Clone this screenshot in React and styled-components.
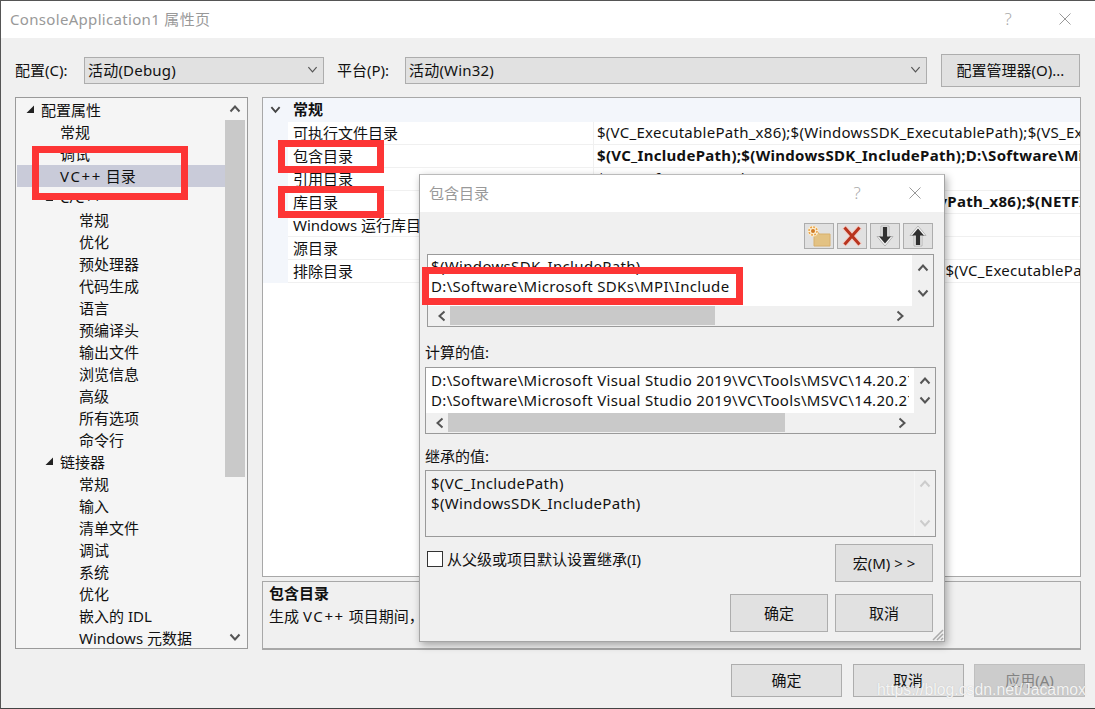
import React from "react";
import styled, { createGlobalStyle } from "styled-components";

const GlobalStyle = createGlobalStyle`
  html, body {
    margin: 0;
    padding: 0;
    background: #f0f0f0;
    overflow: hidden;
  }
  * {
    box-sizing: border-box;
  }
  body {
    font-family: "Noto Sans", "Noto Sans CJK SC", sans-serif;
    font-size: 14px;
    color: #111;
  }
`;

const treeRows = [
  { label: "配置属性", level: 0, open: true },
  { label: "常规", level: 1 },
  { label: "调试", level: 1 },
  { label: "VC++ 目录", level: 1, selected: true },
  { label: "C/C++", level: 1, open: true },
  { label: "常规", level: 2 },
  { label: "优化", level: 2 },
  { label: "预处理器", level: 2 },
  { label: "代码生成", level: 2 },
  { label: "语言", level: 2 },
  { label: "预编译头", level: 2 },
  { label: "输出文件", level: 2 },
  { label: "浏览信息", level: 2 },
  { label: "高级", level: 2 },
  { label: "所有选项", level: 2 },
  { label: "命令行", level: 2 },
  { label: "链接器", level: 1, open: true },
  { label: "常规", level: 2 },
  { label: "输入", level: 2 },
  { label: "清单文件", level: 2 },
  { label: "调试", level: 2 },
  { label: "系统", level: 2 },
  { label: "优化", level: 2 },
  { label: "嵌入的 IDL", level: 2 },
  { label: "Windows 元数据", level: 2 },
];

const gridRows = [
  { name: "可执行文件目录", value: "$(VC_ExecutablePath_x86);$(WindowsSDK_ExecutablePath);$(VS_ExecutablePath_x86)" },
  { name: "包含目录", value: "$(VC_IncludePath);$(WindowsSDK_IncludePath);D:\\Software\\Microsoft SDKs\\MPI\\Include", bold: true },
  { name: "引用目录", value: "$(VC_ReferencesPath_x86);" },
  { name: "库目录", value: "$(VC_LibraryPath_x86);$(WindowsSDK_LibraryPath_x86);$(NETFXKitsDir)Lib\\um\\x86", bold: true },
  { name: "Windows 运行库目录", value: "$(WindowsSDK_MetadataPath);" },
  { name: "源目录", value: "$(VC_SourcePath);" },
  { name: "排除目录", value: "$(VC_IncludePath);$(WindowsSDK_IncludePath);$(VC_ExecutablePath_x86);$(VC_LibraryPath_x86)" },
];

const msvcPath = "D:\\Software\\Microsoft Visual Studio 2019\\VC\\Tools\\MSVC\\14.20.27508\\include";

const Root = styled.div`
  position: relative;
  width: 1095px;
  height: 709px;
  overflow: hidden;
`;

const Window = styled.div`
  width: 100%;
  height: 100%;
  display: flex;
  flex-direction: column;
  background: #f0f0f0;
  border-top: 1px solid #555;
  border-left: 1px solid #555;
  border-bottom: 1px solid #444;
`;

const TitleBar = styled.div`
  height: 37px;
  flex: none;
  display: flex;
  align-items: center;
  padding-bottom: 2px;
  background: #fff;
  color: #999;
`;

const TitleText = styled.div`
  flex: 1;
  padding-left: 9px;
  font-size: 15px;
  letter-spacing: ${(p) => p.$spacing || 0}px;
  white-space: nowrap;
`;

const TitleHelp = styled.span`
  width: 20px;
  margin-right: ${(p) => p.$gap}px;
  text-align: center;
  font-size: 17px;
  font-weight: 300;
  color: #aaa;
`;

const TitleClose = styled.span`
  width: ${(p) => p.$width}px;
  display: flex;
  justify-content: center;
`;

const Toolbar = styled.div`
  display: flex;
  align-items: center;
  height: 33px;
  margin-top: 16px;
  padding-left: 14px;
`;

const FieldLabel = styled.label`
  width: ${(p) => p.$width}px;
  padding-left: ${(p) => p.$inset || 0}px;
  padding-bottom: 2px;
  font-size: 15px;
  white-space: nowrap;
`;

const Select = styled.div`
  width: ${(p) => p.$width}px;
  height: 27px;
  display: flex;
  align-items: center;
  justify-content: space-between;
  padding: 0 5px 2px 3px;
  background: #e1e1e1;
  border: 1px solid #adadad;
  font-size: 15px;
  letter-spacing: 0.2px;
`;

const Button = styled.button`
  width: ${(p) => p.$width}px;
  height: ${(p) => p.$height}px;
  margin-left: ${(p) => p.$offset || 0}px;
  flex: none;
  padding: 0 0 2px;
  background: ${(p) => (p.disabled ? "#ccc" : "#e1e1e1")};
  border: 1px solid ${(p) => (p.disabled ? "#bfbfbf" : "#adadad")};
  color: ${(p) => (p.disabled ? "#838383" : "#111")};
  font-family: inherit;
  font-size: 15px;
  white-space: nowrap;
`;

const Main = styled.div`
  display: flex;
  gap: 14px;
  height: 553px;
  margin-top: 10px;
  padding-left: 14px;
`;

const TreePanel = styled.div`
  width: 233px;
  height: 552px;
  display: flex;
  background: #f5f5f5;
  border: 1px solid #9a9a9a;
`;

const TreeList = styled.div`
  flex: 1;
  min-width: 0;
  padding: 1px 0 0 1px;
  overflow: hidden;
`;

const TreeRow = styled.div`
  height: 22px;
  display: flex;
  align-items: center;
  padding-left: ${(p) => 9 + p.$level * 19}px;
  padding-bottom: 2px;
  background: ${(p) => (p.$selected ? "#c9cbd9" : "transparent")};
  font-size: 15px;
  white-space: nowrap;
`;

const Twisty = styled.span`
  width: 15px;
  flex: none;
  display: flex;
  align-items: center;
`;

const WideSigns = styled.span`
  letter-spacing: 1.6px;
`;

const TreeScroll = styled.div`
  width: 20px;
  flex: none;
  margin-right: 2px;
  display: flex;
  flex-direction: column;
  align-items: center;
`;

const ScrollCap = styled.div`
  width: 100%;
  height: ${(p) => p.$height}px;
  flex: none;
  display: flex;
  align-items: center;
  justify-content: center;
`;

const TreeThumb = styled.div`
  width: 100%;
  height: 357px;
  flex: none;
  background: #c9c9c9;
`;

const TreeTrack = styled.div`
  flex: 1;
`;

const RightColumn = styled.div`
  width: 819px;
  display: flex;
  flex-direction: column;
  gap: 4px;
`;

const PropertyGrid = styled.div`
  height: 480px;
  background: #fff;
  border: 1px solid #a8a8a8;
  overflow: hidden;
`;

const GridHeader = styled.div`
  height: 24px;
  display: flex;
  align-items: center;
  background: #f3f6fb;
  font-size: 15px;
  font-weight: 700;
`;

const GridHeaderLabel = styled.div`
  padding: 0 0 3px 5px;
`;

const GridGutter = styled.div`
  width: 25px;
  height: 100%;
  flex: none;
  display: flex;
  align-items: center;
  justify-content: center;
  padding-bottom: 2px;
  background: #f3f6fb;
`;

const GridRow = styled.div`
  height: 23px;
  display: flex;
  align-items: center;
  font-size: 15px;
  white-space: nowrap;
`;

const GridName = styled.div`
  width: 305px;
  height: 100%;
  flex: none;
  display: flex;
  align-items: center;
  padding: 0 0 2px 5px;
  border-bottom: 1px solid #f0f0f0;
`;

const GridValue = styled.div`
  flex: 1;
  min-width: 0;
  height: 100%;
  display: flex;
  align-items: center;
  padding: 0 0 2px 3px;
  overflow: hidden;
  border-left: 1px solid #f0f0f0;
  border-bottom: 1px solid #f0f0f0;
  font-weight: ${(p) => (p.$bold ? 700 : 400)};
  letter-spacing: ${(p) => (p.$bold ? 0.3 : 0.27)}px;
`;

const Description = styled.div`
  height: 69px;
  padding: 0 6px;
  border: 1px solid #a8a8a8;
  border-bottom-width: 2px;
  font-size: 15px;
  line-height: 23px;
`;

const DescriptionTitle = styled.div`
  font-weight: 700;
`;

const Footer = styled.div`
  display: flex;
  justify-content: flex-end;
  gap: 10.5px;
  margin-top: 14px;
  padding-right: 10px;
`;

const Dialog = styled.div`
  position: absolute;
  left: 419px;
  top: 174px;
  width: 526px;
  height: 468px;
  display: flex;
  flex-direction: column;
  background: #f0f0f0;
  border: 1px solid #a5a5a5;
  border-top-color: #bbb;
  box-shadow: 2px 3px 8px rgba(0, 0, 0, 0.32);
`;

const DialogBody = styled.div`
  flex: 1;
  padding: 11px 8px 0 5px;
  display: flex;
  flex-direction: column;
`;

const IconRow = styled.div`
  display: flex;
  justify-content: flex-end;
  gap: 3px;
  margin-right: 3px;
`;

const IconButton = styled.button`
  width: 30px;
  height: 26px;
  padding: 0;
  display: flex;
  align-items: center;
  justify-content: center;
  background: #e1e1e1;
  border: 1px solid #adadad;
`;

const ListBox = styled.div`
  height: ${(p) => p.$height}px;
  margin: ${(p) => p.$margin || "0"};
  flex: none;
  display: flex;
  flex-direction: column;
  background: #f0f0f0;
  border: 1px solid #9a9a9a;
`;

const ListTop = styled.div`
  flex: 1;
  min-height: 0;
  display: flex;
`;

const ListLines = styled.div`
  flex: 1;
  min-width: 0;
  padding: ${(p) => p.$top}px 5px 0 ${(p) => p.$left}px;
  background: ${(p) => (p.$flat ? "#f0f0f0" : "#fff")};
  overflow: hidden;
  font-size: 15px;
  line-height: 20px;
  letter-spacing: 0.33px;
  white-space: nowrap;
`;

const ListLine = styled.div`
  overflow: hidden;
`;

const VScroll = styled.div`
  width: 21px;
  flex: none;
  padding: 7px 0;
  display: flex;
  flex-direction: column;
  align-items: center;
  justify-content: space-between;
  border-left: 1px solid ${(p) => (p.$faint ? "#f6f6f6" : "transparent")};
`;

const HScroll = styled.div`
  height: 20px;
  flex: none;
  display: flex;
  align-items: center;
  justify-content: space-between;
  padding: 0 27px 0 8px;
  position: relative;
`;

const HThumb = styled.div`
  position: absolute;
  top: 0;
  left: 22px;
  height: 19px;
  background: #c9c9c9;
`;

const GroupLabel = styled.div`
  height: 20px;
  margin: ${(p) => p.$top}px 0 ${(p) => p.$bottom}px;
  font-size: 15px;
  line-height: 20px;
`;

const MacroRow = styled.div`
  display: flex;
  justify-content: space-between;
  margin-top: 7px;
  padding: 0 3px 0 2px;
`;

const CheckLabel = styled.div`
  display: flex;
  gap: 4px;
  height: 29px;
  align-items: center;
  font-size: 15px;
`;

const CheckBox = styled.span`
  width: 16px;
  height: 16px;
  background: #fff;
  border: 1px solid #333;
`;

const DialogFooter = styled.div`
  display: flex;
  justify-content: flex-end;
  gap: 7px;
  margin-top: 12px;
  padding-right: 3px;
`;

const Grip = styled.svg`
  position: absolute;
  right: 0;
  bottom: 0;
`;

const Mark = styled.div`
  position: absolute;
  left: ${(p) => p.$x}px;
  top: ${(p) => p.$y}px;
  width: ${(p) => p.$w}px;
  height: ${(p) => p.$h}px;
  border: 7px solid #fd3535;
  pointer-events: none;
`;

const Watermark = styled.div`
  position: absolute;
  left: 877px;
  top: 681px;
  font-family: "Liberation Sans", Arial, sans-serif;
  font-size: 15.8px;
  color: rgba(255, 255, 255, 0.85);
  text-shadow: 0 0 1px rgba(150, 150, 150, 0.5);
  white-space: nowrap;
`;

const ChevronSvg = styled.svg`
  flex: none;
  transform: rotate(${(p) => p.$turn}deg);
`;

// base shape points down, dir turns it
const Chevron = ({ dir = "down", size = 12, color = "#555", width = 2 }) => {
  const turn = { down: 0, up: 180, left: 90, right: -90 }[dir];
  return (
    <ChevronSvg $turn={turn} width={size} height={size} viewBox="0 0 12 12">
      <polyline points="1.5,3.5 6,8.5 10.5,3.5" fill="none" stroke={color} strokeWidth={width} />
    </ChevronSvg>
  );
};

const Arrow = () => (
  <svg width="9" height="9" viewBox="0 0 9 9">
    <polygon points="8,0.5 8,8 0.5,8" fill="#222" />
  </svg>
);

const CloseIcon = ({ size }) => (
  <svg width={size} height={size} viewBox="0 0 12 12">
    <path d="M0.5 0.5L11.5 11.5M11.5 0.5L0.5 11.5" stroke="#999" strokeWidth="1" fill="none" />
  </svg>
);

const FolderIcon = () => (
  <svg width="26" height="24" viewBox="0 0 26 24">
    <path d="M7 8H12L13 10H24V22H8V8Z" fill="#e3c283" stroke="#d8b06c" strokeWidth="1" />
    <circle cx="7" cy="7" r="5.5" fill="#fbeed2" />
    <circle cx="7" cy="7" r="4" fill="none" stroke="#e9a24a" strokeWidth="1.6" strokeDasharray="1.8 1.3" />
    <circle cx="7" cy="7" r="2" fill="#cf7a26" />
  </svg>
);

const DeleteIcon = () => (
  <svg width="24" height="24" viewBox="0 0 24 24">
    <path d="M4 3L20 21M20 3L4 21" stroke="#f0cfc8" strokeWidth="5.4" fill="none" />
    <path d="M4.5 3.5L19.5 20.5M19.5 3.5L4.5 20.5" stroke="#b9341e" strokeWidth="3" fill="none" />
  </svg>
);

const MoveIcon = ({ up }) => (
  <svg width="20" height="24" viewBox="0 0 20 24" style={up ? undefined : { transform: "rotate(180deg)" }}>
    <path
      d="M10 2L18 11.5H14V22H6V11.5H2Z"
      fill="#f6f6f6"
      stroke="#b5b5b5"
      strokeWidth="1"
      strokeLinejoin="round"
    />
    <path d="M10 4.5L16 11.5H12.2V21H7.8V11.5H4Z" fill="#303030" />
  </svg>
);

const ListField = ({ height, margin, top, left = 5, lines, thumb, faint, flat }) => (
  <ListBox $height={height} $margin={margin}>
    <ListTop>
      <ListLines $top={top} $left={left} $flat={flat}>
        {lines.map((line, i) => (
          <ListLine key={i}>{line}</ListLine>
        ))}
      </ListLines>
      <VScroll $faint={faint}>
        <Chevron dir="up" color={faint ? "#ccc" : "#555"} />
        <Chevron color={faint ? "#ccc" : "#555"} />
      </VScroll>
    </ListTop>
    {thumb && (
      <HScroll>
        <HThumb style={{ width: thumb }} />
        <Chevron dir="left" />
        <Chevron dir="right" />
      </HScroll>
    )}
  </ListBox>
);

export default function App() {
  return (
    <Root>
      <GlobalStyle />
      <Window>
        <TitleBar>
          <TitleText $spacing={0.32}>ConsoleApplication1 属性页</TitleText>
          <TitleHelp $gap={17}>?</TitleHelp>
          <TitleClose $width={60}>
            <CloseIcon size={12} />
          </TitleClose>
        </TitleBar>
        <Toolbar>
          <FieldLabel $width={69}>配置(C):</FieldLabel>
          <Select $width={240}>
            活动(Debug)
            <Chevron size={11} width={1.3} />
          </Select>
          <FieldLabel $width={81} $inset={13}>平台(P):</FieldLabel>
          <Select $width={522}>
            活动(Win32)
            <Chevron size={11} width={1.3} />
          </Select>
          <Button $width={139} $height={33} $offset={14}>配置管理器(O)...</Button>
        </Toolbar>
        <Main>
          <TreePanel>
            <TreeList>
              {treeRows.map((row, i) => (
                <TreeRow key={i} $level={row.level} $selected={row.selected}>
                  <Twisty>{row.open && <Arrow />}</Twisty>
                  {row.selected ? (
                    <span>
                      <WideSigns>VC++</WideSigns> 目录
                    </span>
                  ) : (
                    row.label
                  )}
                </TreeRow>
              ))}
            </TreeList>
            <TreeScroll>
              <ScrollCap $height={22}>
                <Chevron dir="up" />
              </ScrollCap>
              <TreeThumb />
              <TreeTrack />
              <ScrollCap $height={22}>
                <Chevron />
              </ScrollCap>
            </TreeScroll>
          </TreePanel>
          <RightColumn>
            <PropertyGrid>
              <GridHeader>
                <GridGutter>
                  <Chevron size={11} color="#444" />
                </GridGutter>
                <GridHeaderLabel>常规</GridHeaderLabel>
              </GridHeader>
              {gridRows.map((row) => (
                <GridRow key={row.name}>
                  <GridGutter />
                  <GridName>{row.name}</GridName>
                  <GridValue $bold={row.bold}>{row.value}</GridValue>
                </GridRow>
              ))}
            </PropertyGrid>
            <Description>
              <DescriptionTitle>包含目录</DescriptionTitle>
              生成 <WideSigns>VC++</WideSigns> 项目期间，搜索包含文件时使用的路径。
            </Description>
          </RightColumn>
        </Main>
        <Footer>
          <Button $width={111} $height={33}>确定</Button>
          <Button $width={111} $height={33}>取消</Button>
          <Button $width={111} $height={33} disabled>应用(A)</Button>
        </Footer>
      </Window>

      <Mark $x={32} $y={146} $w={156} $h={54} />
      <Mark $x={278} $y={140} $w={106} $h={33} />
      <Mark $x={278} $y={186} $w={106} $h={32} />

      <Dialog>
        <TitleBar>
          <TitleText>包含目录</TitleText>
          <TitleHelp $gap={19}>?</TitleHelp>
          <TitleClose $width={58}>
            <CloseIcon size={12} />
          </TitleClose>
        </TitleBar>
        <DialogBody>
          <IconRow>
            <IconButton><FolderIcon /></IconButton>
            <IconButton><DeleteIcon /></IconButton>
            <IconButton><MoveIcon /></IconButton>
            <IconButton><MoveIcon up /></IconButton>
          </IconRow>
          <ListField
            height={73}
            margin="5px 2px 0"
            top={1}
            left={3}
            lines={["$(WindowsSDK_IncludePath)", "D:\\Software\\Microsoft SDKs\\MPI\\Include"]}
            thumb={265}
          />
          <GroupLabel $top={15} $bottom={5}>计算的值:</GroupLabel>
          <ListField height={67} top={2} lines={[msvcPath, msvcPath]} thumb={337} />
          <GroupLabel $top={12} $bottom={4}>继承的值:</GroupLabel>
          <ListField
            height={67}
            top={2}
            flat
            faint
            lines={["$(VC_IncludePath)", "$(WindowsSDK_IncludePath)"]}
          />
          <MacroRow>
            <CheckLabel>
              <CheckBox />
              从父级或项目默认设置继承(I)
            </CheckLabel>
            <Button $width={98} $height={38}>宏(M) &gt; &gt;</Button>
          </MacroRow>
          <DialogFooter>
            <Button $width={98} $height={38}>确定</Button>
            <Button $width={98} $height={38}>取消</Button>
          </DialogFooter>
        </DialogBody>
        <Grip width="14" height="14" viewBox="0 0 14 14">
          <path d="M13 3L3 13M13 7L7 13M13 11L11 13" stroke="#aaa" strokeWidth="1.5" fill="none" />
        </Grip>
      </Dialog>

      <Mark $x={422} $y={267} $w={321} $h={38} />
      <Watermark>https://blog.csdn.net/Jacamox</Watermark>
    </Root>
  );
}
